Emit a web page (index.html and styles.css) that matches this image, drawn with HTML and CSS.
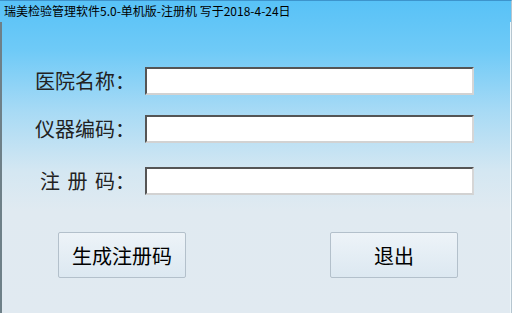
FILE: index.html
```html
<!DOCTYPE html>
<html lang="zh-CN">
<head>
<meta charset="utf-8">
<title>注册机</title>
<link rel="stylesheet" href="styles.css">
</head>
<body>
<div class="window">
  <div class="title">瑞美检验管理软件5.0-单机版-注册机 写于2018-4-24日</div>
  <div class="content">
    <div class="form">
      <label class="label">医院名称：</label>
      <div class="field"></div>
      <label class="label">仪器编码：</label>
      <div class="field"></div>
      <label class="label label-last">注 册 码：</label>
      <div class="field field-last"></div>
    </div>
    <div class="buttons">
      <button class="btn">生成注册码</button>
      <button class="btn">退出</button>
    </div>
  </div>
</div>
</body>
</html>
```

FILE: styles.css
```css
html, body {
  margin: 0;
  padding: 0;
}
body {
  width: 512px;
  height: 313px;
  overflow: hidden;
  font-family: "Noto Sans CJK SC", "Microsoft YaHei", sans-serif;
}
.window {
  width: 512px;
  height: 313px;
  display: flex;
  flex-direction: column;
  background: linear-gradient(to bottom, #58c2f7 0px, #6fcaf7 50px, #a7daf5 110px, #d4e7f2 170px, #e0eaf1 210px, #e1eaf1 313px);
  border-top: 1px solid #3d94cc;
  border-right: 1px solid #b6c6d0;
  box-sizing: border-box;
}
.title {
  height: 21px;
  padding-left: 4px;
  font-size: 12px;
  line-height: 19px;
  color: #000;
  white-space: nowrap;
}
.content {
  flex: 1;
  border-left: 2px solid #6e8088;
  border-right: 1px solid #eef6fa;
  display: flex;
  flex-direction: column;
}
.form {
  display: grid;
  grid-template-columns: 100px 329px;
  grid-auto-rows: 28px;
  column-gap: 10px;
  row-gap: 20px;
  margin-top: 45px;
  padding-left: 33px;
}
.label {
  font-size: 20px;
  line-height: 28px;
  text-align: right;
  color: #222;
  white-space: pre;
}
.label-last {
  word-spacing: 3px;
}
.label-last, .field-last {
  margin-top: 4px;
}
.field {
  background: #fff;
  border-top: 2px solid #555;
  border-left: 2px solid #555;
  border-bottom: 2px solid #d2d2d2;
  border-right: 2px solid #d6d6d6;
  box-sizing: border-box;
  height: 28px;
}
.buttons {
  display: flex;
  gap: 144px;
  margin-top: 41px;
  padding-left: 56px;
}
.btn {
  width: 128px;
  height: 46px;
  border: 1px solid #b3c0cb;
  border-radius: 2px;
  background: linear-gradient(to bottom, #edf3f8, #dce8f1);
  font-family: "Noto Sans CJK SC", "Microsoft YaHei", sans-serif;
  font-size: 20px;
  color: #000;
  padding: 0;
}
```
